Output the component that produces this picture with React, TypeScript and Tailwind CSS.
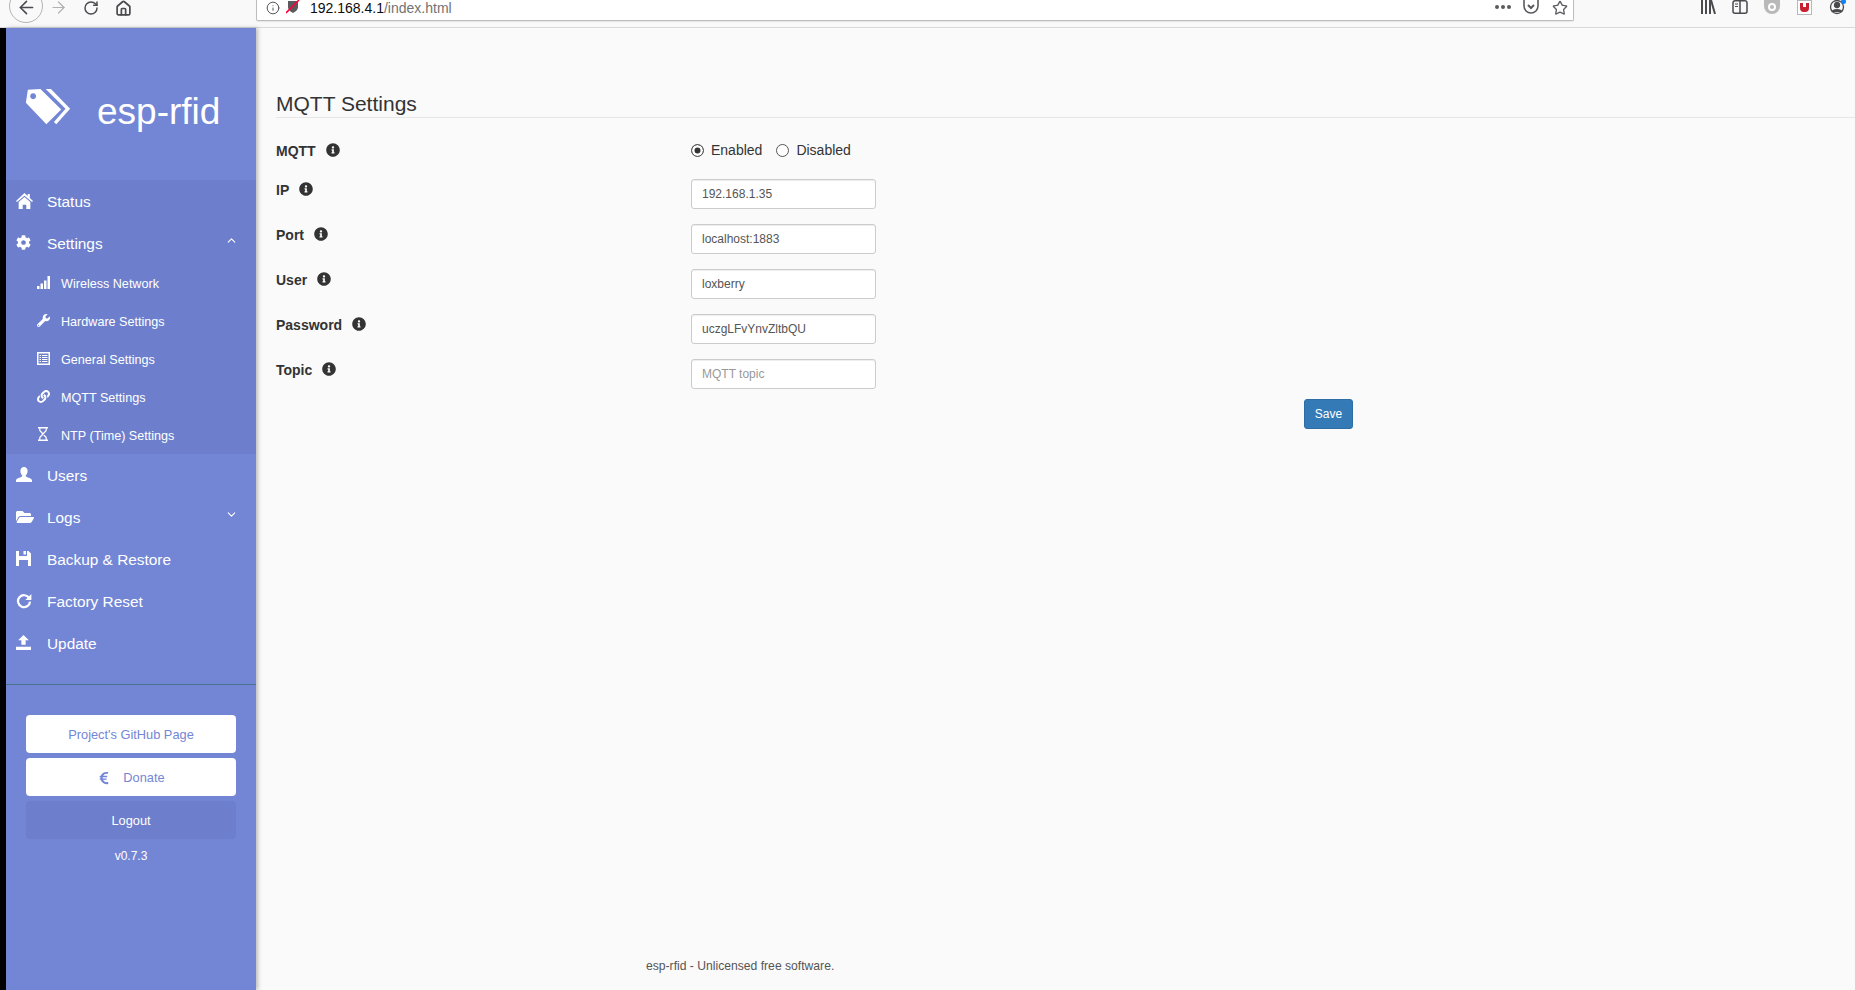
import type { ReactNode } from 'react';
import { ArrowLeft, ArrowRight, ChevronDown, ChevronUp, Home, Info, RotateCw, Star } from 'lucide-react';
import { FaCog, FaEuroSign, FaFolderOpen, FaInfoCircle, FaLink, FaWrench } from 'react-icons/fa';

const TagsIcon = () => (
  <svg viewBox="76 265 138 112" className="w-[46px] h-[37px] -ml-[1px]" fill="currentColor">
    <path
      fillRule="evenodd"
      d="M84 270l38-2 63 62-45 45-62-65zM100 281a9 9 0 1 0 .01 0z"
    />
    <path d="M138 268h16l58 60-42 47-7-7 35-40z" />
  </svg>
);

const HomeIcon = () => (
  <svg viewBox="0 0 16 15" className="w-[17px] h-[16px]" fill="currentColor">
    <path d="M8 0l3 2.800V1h2v3.700l3 2.800-.9 1L8 2.500.9 8.500 0 7.500z" />
    <path d="M8 3.800l5.500 4.700V15H9.700v-4H6.300v4H2.500V8.500z" />
  </svg>
);

const SignalIcon = () => (
  <svg viewBox="0 0 13 13" className="w-[13px] h-[13px]" fill="currentColor">
    <path d="M0 10h2.500v3H0zM3.500 7.500H6V13H3.500zM7 4.500h2.500V13H7zM10.500 0H13v13h-2.500z" />
  </svg>
);

const ListIcon = () => (
  <svg viewBox="0 0 13 13" className="w-[13px] h-[13px]" fill="currentColor">
    <path
      fillRule="evenodd"
      d="M0 0h13v13H0zM1.500 1.500v10h10v-10zM2.500 3H4v1H2.500zM5 3h5.500v1H5zM2.500 5H4v1H2.500zM5 5h5.500v1H5zM2.500 7H4v1H2.500zM5 7h5.500v1H5zM2.500 9H4v1H2.500zM5 9h5.500v1H5z"
    />
  </svg>
);

const HourglassIcon = () => (
  <svg viewBox="0 0 10 14" className="w-[10px] h-[14px] ml-[1px]" fill="none" stroke="currentColor" strokeWidth="1.500">
    <path d="M0 .8h10M0 13.200h10" />
    <path d="M1.800 1v2.500L8.200 10.500V13M8.200 1v2.500L1.800 10.500V13" strokeWidth="1.200" />
  </svg>
);

const UserIcon = () => (
  <svg viewBox="0 0 16 15" className="w-[16px] h-[15px]" fill="currentColor">
    <path d="M8 0c2.300 0 3.600 1.700 3.600 4 0 2-1 3.700-1.900 4.500 0 1 .6 1.300 2.300 2 1.800.7 3.600 1.300 4 2.500v2H0v-2c.4-1.200 2.200-1.800 4-2.500 1.700-.7 2.300-1 2.300-2C5.400 7.700 4.400 6 4.400 4 4.400 1.700 5.700 0 8 0z" />
  </svg>
);

const SaveIcon = () => (
  <svg viewBox="0 0 15 15" className="w-[15px] h-[15px]" fill="currentColor">
    <path
      fillRule="evenodd"
      d="M0 0h3v5h8V0h1.500L15 2.500V15H0zM3 9v6h9V9zM7.500 0H10v3.500H7.500z"
    />
  </svg>
);

const RefreshIcon = () => (
  <svg viewBox="0 0 16 16" className="w-[16px] h-[16px]" fill="none" stroke="currentColor">
    <path d="M13.200 5.200A6 6 0 1 0 14 8.600" strokeWidth="2.200" />
    <path d="M15.400 1v6h-6z" fill="currentColor" stroke="none" />
  </svg>
);

const UploadIcon = () => (
  <svg viewBox="0 0 14 14" className="w-[15px] h-[15px]" fill="currentColor">
    <path d="M7 0l5 5H9v4H5V5H2zM0 11h14v3H0z" />
  </svg>
);

const BrowserBar = () => (
  <div className="h-[28px] shrink-0 flex items-start bg-[#f9f9fa] border-b border-[#d9d9da] overflow-hidden text-[#4a4a4f]">
    <div className="w-[256px] shrink-0 flex items-start">
      <div className="ml-[9px] -mt-[11px] w-[34px] h-[34px] rounded-full border border-[#b4b4b4] flex items-center justify-center">
        <ArrowLeft size={21} strokeWidth={1.800} className="mt-[3px]" />
      </div>
      <ArrowRight size={19} strokeWidth={1.500} className="ml-[6px] -mt-[2px] text-[#b1b1b3]" />
      <RotateCw size={16} strokeWidth={2.200} className="ml-[15px]" />
      <Home size={17} strokeWidth={2.400} className="ml-[16px]" />
    </div>
    <div className="w-[1318px] h-[21px] bg-white border-x border-b border-[#bdbdbd] rounded-b-[2px] shadow-[0_1px_1px_rgba(0,0,0,0.08)] flex items-start">
      <Info size={14} strokeWidth={1.600} className="ml-[9px] mt-[1px]" />
      <svg viewBox="0 0 14 14" className="ml-[6px] w-[14px] h-[14px]">
        <path d="M2 1h10v6c0 3-3 5-5 6-2-1-5-3-5-6z" fill="#5b5b5f" />
        <path d="M0 13L13 0" stroke="#ff0039" strokeWidth="1.600" />
      </svg>
      <span className="ml-[10px] text-[14px] leading-[16px] text-[#0c0c0d]">
        192.168.4.1<span className="text-[#737373]">/index.html</span>
      </span>
      <div className="ml-auto mr-[5px] flex items-start">
        <div className="flex gap-[2px] mt-[5px]">
          <span className="w-[4px] h-[4px] rounded-full bg-[#5b5b5f]" />
          <span className="w-[4px] h-[4px] rounded-full bg-[#5b5b5f]" />
          <span className="w-[4px] h-[4px] rounded-full bg-[#5b5b5f]" />
        </div>
        <svg viewBox="0 0 16 14" className="ml-[12px] w-[16px] h-[14px]" fill="none" stroke="#5b5b5f" strokeWidth="1.600">
          <path d="M1 0v6a7 7 0 0 0 14 0V0" />
          <path d="M5 5l3 3 3-3" strokeWidth="2" />
        </svg>
        <Star size={16} strokeWidth={2} className="ml-[13px] text-[#5b5b5f]" />
      </div>
    </div>
    <div className="flex-1 flex items-start">
      <svg viewBox="0 0 16 14" className="ml-[126px] w-[16px] h-[14px]" stroke="#4a4a4f" strokeWidth="2" fill="none">
        <path d="M2 0v14M6 0v14M10 0v14M11 0l4 14" />
      </svg>
      <svg viewBox="0 0 16 14" className="ml-[16px] w-[16px] h-[14px]" stroke="#4a4a4f" strokeWidth="1.500" fill="none">
        <path d="M3 .8h10a2 2 0 0 1 2 2v8.400a2 2 0 0 1-2 2H3a2 2 0 0 1-2-2V2.800a2 2 0 0 1 2-2zM8 .8v12.400" />
        <path d="M3 4h3M3 6.500h3" strokeWidth="1" />
      </svg>
      <div className="ml-[16px] w-[16px] h-[14px] rounded-b-full bg-[#b9b9b9] flex items-center justify-center">
        <div className="w-[8px] h-[8px] rounded-full border-2 border-white" />
      </div>
      <div className="ml-[17px] w-[15px] h-[15px] bg-white border border-[#b8b8b8] flex items-center justify-center">
        <div className="w-[9px] h-[9px] rounded-b-[4px] bg-[#c8202f] flex items-start justify-center">
          <div className="w-[3px] h-[4px] bg-white" />
        </div>
      </div>
      <div className="relative ml-[17px]">
        <svg viewBox="0 0 16 15" className="w-[16px] h-[15px]" stroke="#4a4a4f" fill="none" strokeWidth="1.300">
          <circle cx="8" cy="7" r="6.500" />
          <circle cx="8" cy="5" r="2.500" fill="#4a4a4f" />
          <path d="M3 12c1-3 9-3 10 0" fill="#4a4a4f" />
        </svg>
        <span className="absolute -top-[1px] -right-[1px] w-[5px] h-[5px] rounded-full bg-[#0a84ff]" />
      </div>
    </div>
  </div>
);

const MenuRow = ({ icon, label, chevron }: { icon: ReactNode; label: string; chevron?: ReactNode }) => (
  <a className="h-[42px] flex items-center text-[15.400px] text-white">
    <span className="w-[41px] pl-[10px] shrink-0 flex items-center -mt-[1px]">{icon}</span>
    <span className="pt-[2px]">{label}</span>
    {chevron && <span className="ml-auto mr-[18px] -mt-[6px]">{chevron}</span>}
  </a>
);

const SubRow = ({ icon, label }: { icon: ReactNode; label: string }) => (
  <a className="h-[38px] flex items-center text-[12.600px] text-white">
    <span className="w-[55px] pl-[31px] shrink-0 flex items-center -mt-[2px]">{icon}</span>
    <span className="pt-[2px]">{label}</span>
  </a>
);

const Sidebar = () => (
  <aside className="w-[250px] shrink-0 flex flex-col bg-[#7386d5] text-white shadow-[2px_0_4px_rgba(0,0,0,0.25)] z-10">
    <div className="h-[152px] shrink-0 flex items-center pl-[20px]">
      <span className="mt-[4px]">
        <TagsIcon />
      </span>
      <span className="ml-[26px] mt-[15px] text-[37px] leading-none">esp-rfid</span>
    </div>
    <div className="bg-[#6d7fcc]">
      <MenuRow icon={<HomeIcon />} label="Status" />
      <MenuRow
        icon={<FaCog size={15} />}
        label="Settings"
        chevron={<ChevronUp size={13} strokeWidth={2} />}
      />
      <SubRow icon={<SignalIcon />} label="Wireless Network" />
      <SubRow icon={<FaWrench size={13} />} label="Hardware Settings" />
      <SubRow icon={<ListIcon />} label="General Settings" />
      <SubRow icon={<FaLink size={13} />} label="MQTT Settings" />
      <SubRow icon={<HourglassIcon />} label="NTP (Time) Settings" />
    </div>
    <MenuRow icon={<UserIcon />} label="Users" />
    <MenuRow
      icon={<FaFolderOpen size={18} />}
      label="Logs"
      chevron={<ChevronDown size={13} strokeWidth={2} />}
    />
    <MenuRow icon={<SaveIcon />} label="Backup & Restore" />
    <MenuRow icon={<RefreshIcon />} label="Factory Reset" />
    <MenuRow icon={<UploadIcon />} label="Update" />
    <div className="mt-[20px] border-t border-[#47748b]" />
    <div className="mt-[30px] px-[20px] flex flex-col gap-[5px] text-[12.800px]">
      <a className="h-[38px] pt-[1px] rounded-[4px] bg-white text-[#7386d5] flex items-center justify-center">
        Project's GitHub Page
      </a>
      <a className="h-[38px] pt-[1px] rounded-[4px] bg-white text-[#7386d5] flex items-center justify-center">
        <FaEuroSign size={14} className="mr-[12px]" />
        Donate
      </a>
      <a className="h-[38px] pt-[1px] rounded-[4px] bg-[#6d7fcc] text-white flex items-center justify-center">Logout</a>
    </div>
    <div className="mt-[9px] text-center text-[12px] leading-[16px]">v0.7.3</div>
  </aside>
);

const FieldLabel = ({ label }: { label: string }) => (
  <label className="w-[415px] shrink-0 flex items-center h-[20px] text-[14px] font-bold text-[#333]">
    <span className="pt-[2px]">{label}</span>
    <FaInfoCircle size={14} className="ml-[10px] -mt-[1px] text-[#333]" />
  </label>
);

const fields = [
  { label: 'IP', value: '192.168.1.35', placeholder: '' },
  { label: 'Port', value: 'localhost:1883', placeholder: '' },
  { label: 'User', value: 'loxberry', placeholder: '' },
  { label: 'Password', value: 'uczgLFvYnvZltbQU', placeholder: '' },
  { label: 'Topic', value: '', placeholder: 'MQTT topic' },
];

const MqttForm = () => (
  <form className="w-[1077px] mt-[22px]" onSubmit={(e) => e.preventDefault()}>
    <div className="flex h-[39px]">
      <FieldLabel label="MQTT" />
      <div className="flex items-center h-[20px] text-[14px] text-[#333]">
        <input
          type="radio"
          name="mqtt"
          defaultChecked
          className="appearance-none w-[13px] h-[13px] rounded-full border border-[#555] bg-white checked:bg-[#333] checked:shadow-[inset_0_0_0_2.500px_#fff]"
        />
        <span className="ml-[7px]">Enabled</span>
        <input
          type="radio"
          name="mqtt"
          className="appearance-none ml-[14px] w-[13px] h-[13px] rounded-full border border-[#555] bg-white"
        />
        <span className="ml-[7px]">Disabled</span>
      </div>
    </div>
    <div className="flex flex-col gap-[15px]">
      {fields.map((field) => (
        <div key={field.label} className="flex h-[30px]">
          <FieldLabel label={field.label} />
          <input
            type="text"
            defaultValue={field.value}
            placeholder={field.placeholder}
            className="w-[185px] h-[30px] px-[10px] text-[12px] text-[#555] placeholder:text-[#999] bg-white border border-[#ccc] rounded-[3px] shadow-[inset_0_1px_1px_rgba(0,0,0,0.075)] outline-none"
          />
        </div>
      ))}
    </div>
    <div className="flex justify-end mt-[10px]">
      <button
        type="submit"
        className="w-[49px] h-[30px] text-[12px] text-white bg-[#337ab7] border border-[#2e6da4] rounded-[3px]"
      >
        Save
      </button>
    </div>
  </form>
);

export default function App() {
  return (
    <div className="w-[1855px] h-[990px] flex flex-col overflow-hidden bg-[#fafafa] font-['Liberation_Sans',Arial,sans-serif]">
      <BrowserBar />
      <div className="flex flex-1 min-h-0">
        <div className="w-[6px] shrink-0 bg-black" />
        <Sidebar />
        <main className="flex-1 flex flex-col pl-[20px]">
          <div className="mt-[62px] h-[28px] border-b border-[#e7e7e7] text-[21px] leading-[28px] text-[#333]">
            MQTT Settings
          </div>
          <MqttForm />
          <footer className="mt-auto mb-[16px] ml-[370px] text-[12.150px] leading-[16px] text-[#555]">
            esp-rfid - Unlicensed free software.
          </footer>
        </main>
      </div>
    </div>
  );
}
